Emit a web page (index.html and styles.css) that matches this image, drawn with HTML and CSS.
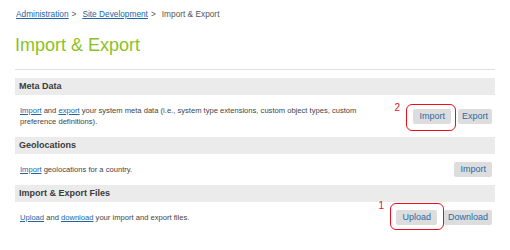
FILE: index.html
```html
<!DOCTYPE html>
<html lang="en">
<head>
  <meta charset="UTF-8" />
  <title>Import &amp; Export</title>
  <link rel="stylesheet" href="styles.css">
</head>
<body>
  <div class="page">
    <div class="breadcrumb">
      <a href="#">Administration</a><span class="sep">&gt;</span><a href="#">Site Development</a><span class="sep">&gt;</span><span class="current">Import &amp; Export</span>
    </div>

    <h1>Import &amp; Export</h1>

    <!-- Meta Data -->
    <div class="section">
      <div class="section-title">Meta Data</div>
      <div class="section-row">
        <p class="desc"><a href="#">Import</a> and <a href="#">export</a> your system meta data (i.e., system type extensions, custom object types, custom<br>preference definitions).</p>
        <div class="actions">
          <span class="marked">
            <span class="mark-num">2</span>
            <button class="btn btn-main">Import</button>
          </span>
          <button class="btn">Export</button>
        </div>
      </div>
    </div>

    <!-- Geolocations -->
    <div class="section">
      <div class="section-title">Geolocations</div>
      <div class="section-row">
        <p class="desc"><a href="#">Import</a> geolocations for a country.</p>
        <div class="actions">
          <button class="btn btn-main">Import</button>
        </div>
      </div>
    </div>

    <!-- Files -->
    <div class="section">
      <div class="section-title">Import &amp; Export Files</div>
      <div class="section-row">
        <p class="desc"><a href="#">Upload</a> and <a href="#">download</a> your import and export files.</p>
        <div class="actions">
          <span class="marked marked-one">
            <span class="mark-num">1</span>
            <button class="btn btn-main">Upload</button>
          </span>
          <button class="btn">Download</button>
        </div>
      </div>
    </div>
  </div>
</body>
</html>
```

FILE: styles.css
```css
* {
  box-sizing: border-box;
  margin: 0;
  padding: 0;
}

body {
  font-family: "Liberation Sans", Arial, sans-serif;
  background: #fff;
  color: #444;
}

.page {
  padding: 8px 15px 0 15px;
}

a {
  color: #2166a8;
  text-decoration: underline;
}

.breadcrumb {
  font-size: 8.3px;
  line-height: 12px;
  color: #555;
  padding-left: 1px;
}

.breadcrumb .sep {
  margin: 0 6px 0 3px;
}

h1 {
  font-size: 18px;
  font-weight: normal;
  color: #8cc21f;
  line-height: 22px;
  margin-top: 14px;
  padding-bottom: 13px;
  border-bottom: 1px solid #dedede;
  margin-bottom: 8px;
}

.section-title {
  background: #ebebeb;
  font-size: 9px;
  font-weight: bold;
  color: #3a3a3a;
  height: 17px;
  line-height: 17px;
  padding-left: 4px;
}

.section-row {
  display: flex;
  justify-content: space-between;
  align-items: center;
  padding: 10px 3px 10px 5px;
}

.desc {
  font-size: 7.6px;
  line-height: 11px;
  color: #444;
}

.actions {
  display: flex;
  align-items: center;
  gap: 7px;
  margin: -2px 0;
}

.btn {
  font-family: "Liberation Sans", Arial, sans-serif;
  font-size: 9px;
  height: 15px;
  line-height: 15px;
  padding: 0 4px;
  background: #dddddd;
  color: #2b6aa6;
  border: none;
  border-radius: 2px;
  cursor: pointer;
}

.btn-main {
  padding: 0 6px;
}

.marked {
  position: relative;
  display: inline-flex;
}

.marked::after {
  content: "";
  position: absolute;
  left: -7px;
  right: -5px;
  top: -5px;
  bottom: -7px;
  border: 1.5px solid #e8101a;
  border-radius: 6px;
}

.marked-one::after {
  left: -6px;
  right: -7px;
  top: -7px;
  bottom: -5px;
}

.mark-num {
  position: absolute;
  left: -19px;
  top: -6px;
  font-size: 10px;
  line-height: 10px;
  color: #e8101a;
}

.marked-one .mark-num {
  left: -18px;
  top: -9px;
}
```
